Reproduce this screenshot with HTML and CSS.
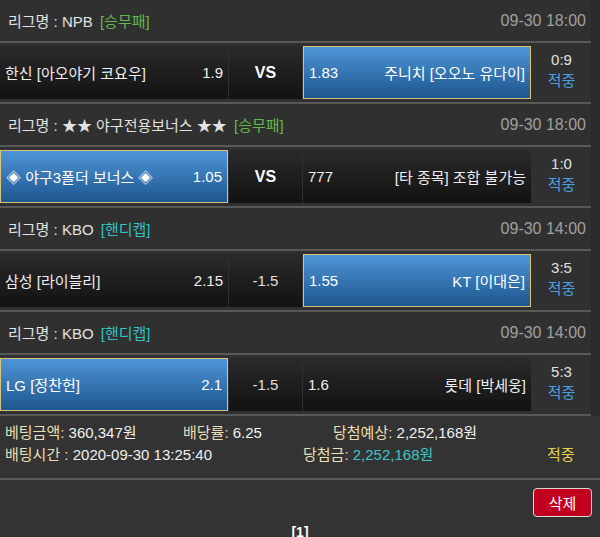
FILE: index.html
```html
<!DOCTYPE html>
<html lang="ko">
<head>
<meta charset="utf-8">
<title>배팅내역</title>
<link rel="stylesheet" href="styles.css">
</head>
<body>
<div class="board">
  <div class="list">
    <section class="game">
      <div class="game-head">
        <span class="league">리그명 : NPB <em class="type win">[승무패]</em></span>
        <span class="time">09-30 18:00</span>
      </div>
      <div class="game-row">
        <div class="cell team"><span>한신 [아오야기 코요우]</span><span>1.9</span></div>
        <div class="cell mid vs">VS</div>
        <div class="cell team picked"><span>1.83</span><span>주니치 [오오노 유다이]</span></div>
        <div class="result"><span class="score">0:9</span><span class="hit">적중</span></div>
      </div>
    </section>
    <section class="game">
      <div class="game-head">
        <span class="league">리그명 : ★★ 야구전용보너스 ★★ <em class="type win">[승무패]</em></span>
        <span class="time">09-30 18:00</span>
      </div>
      <div class="game-row">
        <div class="cell team picked"><span>◈ 야구3폴더 보너스 ◈</span><span>1.05</span></div>
        <div class="cell mid vs">VS</div>
        <div class="cell team"><span>777</span><span>[타 종목] 조합 불가능</span></div>
        <div class="result"><span class="score">1:0</span><span class="hit">적중</span></div>
      </div>
    </section>
    <section class="game">
      <div class="game-head">
        <span class="league">리그명 : KBO <em class="type handi">[핸디캡]</em></span>
        <span class="time">09-30 14:00</span>
      </div>
      <div class="game-row">
        <div class="cell team"><span>삼성 [라이블리]</span><span>2.15</span></div>
        <div class="cell mid">-1.5</div>
        <div class="cell team picked"><span>1.55</span><span>KT [이대은]</span></div>
        <div class="result"><span class="score">3:5</span><span class="hit">적중</span></div>
      </div>
    </section>
    <section class="game">
      <div class="game-head">
        <span class="league">리그명 : KBO <em class="type handi">[핸디캡]</em></span>
        <span class="time">09-30 14:00</span>
      </div>
      <div class="game-row">
        <div class="cell team picked"><span>LG [정찬헌]</span><span>2.1</span></div>
        <div class="cell mid">-1.5</div>
        <div class="cell team"><span>1.6</span><span>롯데 [박세웅]</span></div>
        <div class="result"><span class="score">5:3</span><span class="hit">적중</span></div>
      </div>
    </section>
  </div>

  <div class="summary">
    <div class="sum-line">
      <span class="sum-item w1"><span class="lbl">베팅금액:</span> 360,347원</span>
      <span class="sum-item w2"><span class="lbl">배당률:</span> 6.25</span>
      <span class="sum-item"><span class="lbl">당첨예상:</span> 2,252,168원</span>
    </div>
    <div class="sum-line">
      <span class="sum-item w3"><span class="lbl">배팅시간 :</span> 2020-09-30 13:25:40</span>
      <span class="sum-item w4"><span class="lbl">당첨금:</span> <span class="win-amt">2,252,168원</span></span>
      <span class="sum-item status">적중</span>
    </div>
  </div>

  <div class="actions">
    <button class="btn-del" type="button">삭제</button>
  </div>
  <div class="pager">[1]</div>
</div>
</body>
</html>
```

FILE: styles.css
```css
* {
  box-sizing: border-box;
}

body {
  margin: 0;
  background: #333333;
  font-family: "Liberation Sans", "Noto Sans CJK KR", sans-serif;
  font-size: 15px;
  color: #e6e6e6;
}

.board {
  width: 600px;
}

.list {
  background: #2a2a2a;
}

.game {
  width: 591px;
  background: #303030;
}

.game-head {
  height: 43px;
  display: flex;
  align-items: center;
  justify-content: space-between;
  padding: 0 5px 0 8px;
  border-bottom: 2px solid #585858;
}

.league {
  color: #e2e2e2;
}

.type {
  font-style: normal;
  margin-left: 3px;
}

.type.win {
  color: #66b84a;
}

.type.handi {
  color: #35c2c2;
}

.time {
  color: #a0a0a0;
  font-size: 16px;
}

.game-row {
  display: grid;
  grid-template-columns: 228px 73px 228px 1fr;
  column-gap: 1px;
  padding: 3px 0;
  border-bottom: 2px solid #585858;
}

.cell {
  height: 53px;
  background: linear-gradient(#2a2a2a, #121212);
  display: flex;
  align-items: center;
  color: #eeeeee;
}

.team {
  justify-content: space-between;
  padding: 0 5px;
}

.team.picked {
  background: linear-gradient(#4f95d6, #1c568f);
  border: 1px solid #dcc47c;
  color: #ffffff;
}

.mid {
  justify-content: center;
  color: #e0e0e0;
}

.vs {
  font-weight: bold;
  font-size: 16px;
  color: #ffffff;
}

.result {
  display: flex;
  flex-direction: column;
  align-items: center;
  justify-content: center;
  line-height: 21px;
  padding-bottom: 6px;
}

.score {
  color: #e0e0e0;
}

.hit {
  color: #4a9fe4;
}

.summary {
  padding: 6px 5px 12px;
  border-bottom: 2px solid #585858;
}

.sum-line {
  display: flex;
  line-height: 22px;
  color: #f0f0f0;
}

.sum-item.w1 {
  width: 178px;
}

.sum-item.w2 {
  width: 150px;
}

.sum-item.w3 {
  width: 298px;
}

.sum-item.w4 {
  width: 244px;
}

.lbl {
  color: #eadfb2;
}

.win-amt {
  color: #3ec6c6;
}

.status {
  color: #e8d44a;
}

.actions {
  display: flex;
  justify-content: flex-end;
  padding: 8px 8px 0;
}

.btn-del {
  width: 59px;
  height: 29px;
  background: #c10020;
  border: 1.5px solid #d8d8d8;
  border-radius: 4px;
  color: #ffffff;
  font-family: "Liberation Sans", "Noto Sans CJK KR", sans-serif;
  font-size: 15px;
  padding: 0;
}

.pager {
  text-align: center;
  font-weight: bold;
  font-size: 14px;
  color: #ffffff;
  padding-top: 7px;
}
```
